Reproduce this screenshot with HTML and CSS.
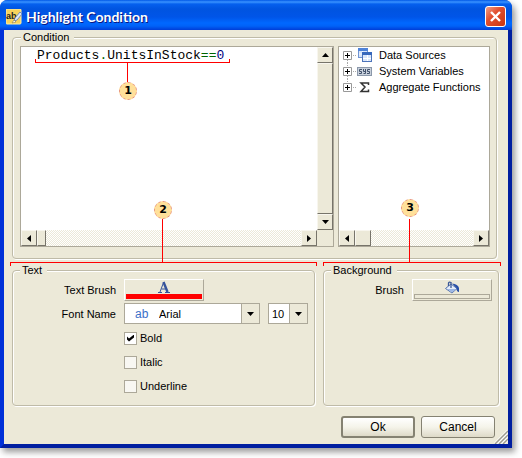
FILE: index.html
```html
<!DOCTYPE html>
<html lang="en">
<head>
  <meta charset="UTF-8" />
  <meta name="viewport" content="width=device-width, initial-scale=1.0" />
  <title>Highlight Condition</title>
  <link rel="stylesheet" href="styles.css">
</head>
<body>
  <div class="window">
    <header class="titlebar">
      <svg class="app-icon" width="16" height="16" viewBox="0 0 16 16">
        <rect x="0" y="0" width="15" height="15" rx="1" fill="#f7d35c" stroke="#fff0a8"/>
        <text x="0" y="10" class="icon-ab">ab</text>
        <path d="M8 12l1-3 5-6 2 2-5 6z" fill="#dfe9f7" stroke="#5c7bb0" stroke-width=".8"/>
        <path d="M6 14l2-3 2 2z" fill="#fff" stroke="#8a7a45" stroke-width=".6"/>
      </svg>
      <h1>Highlight Condition</h1>
      <button class="close" aria-label="Close">
        <svg width="19" height="19" viewBox="0 0 19 19"><path d="M5 5l9 9M14 5l-9 9" stroke="#fff" stroke-width="2.4"/></svg>
      </button>
    </header>

    <form class="client" onsubmit="return false">
      <fieldset class="condition">
        <legend>Condition</legend>
        <div class="editor">
          <div class="code" contenteditable="true" spellcheck="false" role="textbox" aria-label="Condition">Products<b>.</b>UnitsInStock<b>==</b><i>0</i></div>
          <div class="vbar">
            <button class="arrow" aria-label="Up"><svg width="7" height="4"><path d="M0 4L3.500 0L7 4z"/></svg></button>
            <span class="thumb"></span>
            <button class="arrow" aria-label="Down"><svg width="7" height="4"><path d="M0 0h7L3.500 4z"/></svg></button>
          </div>
          <div class="hbar">
            <button class="arrow" aria-label="Left"><svg width="4" height="7"><path d="M4 0v7L0 3.500z"/></svg></button>
            <span class="thumb small"></span>
            <button class="arrow end" aria-label="Right"><svg width="4" height="7"><path d="M0 0v7L4 3.500z"/></svg></button>
          </div>
        </div>
        <div class="tree">
          <ul>
            <li>
              <svg class="plus" width="14" height="16"><path d="M4.500 13v3M10 8.500h4" class="dots"/><path d="M.5 4.500h8v8h-8z" class="box"/><path d="M2 8.500h5M4.500 6v5" class="sign"/></svg>
              <svg width="16" height="16" viewBox="0 0 16 16">
                <rect x="1.500" y="1.500" width="9" height="9" fill="#d6e4fa" stroke="#6f93d2"/><path d="M1 1h10v3H1z" fill="#4f83d8"/><path d="M2 7h8M5.500 4v6" stroke="#f4f8ff"/>
                <rect x="5.500" y="6.500" width="9" height="8" fill="#d9e6fb" stroke="#4d74ba"/><path d="M5 5h10v3H5z" fill="#3768bd"/><path d="M6 11.500h8M10.500 8v6" stroke="#fff"/>
              </svg>
              <span>Data Sources</span>
            </li>
            <li>
              <svg class="plus" width="14" height="16"><path d="M4.500 0v4M4.500 13v3M10 8.500h4" class="dots"/><path d="M.5 4.500h8v8h-8z" class="box"/><path d="M2 8.500h5M4.500 6v5" class="sign"/></svg>
              <svg width="16" height="16" viewBox="0 0 16 16">
                <rect x=".5" y="4.500" width="14" height="8" fill="#c9d1dc" stroke="#8b98aa"/>
                <path d="M5 6.500H2.500v2h2v2H2M6.500 6v2.500h2V6M8.500 8v2.500h-2M13 6.500h-2.500v2h2v2H10" fill="none" stroke="#40506a"/>
              </svg>
              <span>System Variables</span>
            </li>
            <li>
              <svg class="plus" width="14" height="16"><path d="M4.500 0v4M10 8.500h4" class="dots"/><path d="M.5 4.500h8v8h-8z" class="box"/><path d="M2 8.500h5M4.500 6v5" class="sign"/></svg>
              <svg width="16" height="16" viewBox="0 0 16 16"><path d="M11.500 6V4H4L8 8L4 12.500h7.500V10.500" fill="none" stroke="#333" stroke-width="1.500"/></svg>
              <span>Aggregate Functions</span>
            </li>
          </ul>
          <div class="hbar">
            <button class="arrow" aria-label="Left"><svg width="4" height="7"><path d="M4 0v7L0 3.500z"/></svg></button>
            <span class="thumb"></span>
            <button class="arrow end" aria-label="Right"><svg width="4" height="7"><path d="M0 0v7L4 3.500z"/></svg></button>
          </div>
        </div>
      </fieldset>

      <div class="groups">
        <fieldset class="text-group">
          <legend>Text</legend>
          <label for="textBrush">Text Brush</label>
          <button class="brush red" id="textBrush">
            <svg width="12" height="12" viewBox="0 0 12 12"><path d="M0 11.500h4M7 11.500h5M2 11L5.500 1.500M3.500 8h4" stroke="#35539b" fill="none"/><path d="M5.500 1L9.500 11" stroke="#35539b" stroke-width="2.4"/></svg>
            <span></span>
          </button>
          <label for="fontName">Font Name</label>
          <div class="combos">
            <div class="combo font">
              <span class="ab">ab</span>
              <select id="fontName"><option>Arial</option></select>
              <svg width="7" height="4"><path d="M0 0h7L3.500 4z"/></svg>
            </div>
            <div class="combo size">
              <select aria-label="Font size"><option>10</option></select>
              <svg width="7" height="4"><path d="M0 0h7L3.500 4z"/></svg>
            </div>
          </div>
          <div class="checks">
            <label><input type="checkbox" checked>Bold</label>
            <label><input type="checkbox">Italic</label>
            <label><input type="checkbox">Underline</label>
          </div>
        </fieldset>
        <fieldset class="back-group">
          <legend>Background</legend>
          <label for="brush">Brush</label>
          <button class="brush" id="brush">
            <svg width="16" height="13" viewBox="0 0 16 13"><path d="M1.500 7.500L7 3l6 4.500L8 12z" fill="#e6eefa" stroke="#5573ad"/><path d="M3 8l5 3.500 4-3.500z" fill="#9db7e4"/><path d="M8 2.500Q14 3 15 7v4q-2.500 0-2.500-4z" fill="#2850a8"/><path d="M4.500 5V2Q5 .5 7 1.500V7" fill="none" stroke="#3b5998" stroke-width="1.300"/></svg>
            <span></span>
          </button>
        </fieldset>
      </div>

      <footer class="buttons">
        <button class="push default">Ok</button>
        <button class="push">Cancel</button>
      </footer>
    </form>
    <svg class="grip" width="14" height="14"><path d="M1 14L14 1M5 14l9-9M9 14l5-5" stroke="#fff" stroke-width="3"/><path d="M1 14L14 1M5 14l9-9M9 14l5-5" stroke="#9c9a8c" stroke-width="1.500"/></svg>

    <!-- callouts -->
    <div class="mark mark1"><i></i><b>1</b></div>
    <div class="mark mark2"><i></i><b>2</b></div>
    <div class="mark mark3"><i></i><b>3</b></div>
  </div>
</body>
</html>
```
FILE: styles.css
```css
* {
  box-sizing: border-box;
}
body {
  margin: 0;
  padding: 0 10px 10px 0;
  background: #fff;
  font: 11px/16px "Liberation Sans", Arial, sans-serif;
  color: #000;
}
button, select, input {
  font: inherit;
  color: inherit;
  margin: 0;
  padding: 0;
}
svg {
  display: block;
  flex: none;
}
.window {
  position: relative;
  border: 4px solid #0831d9;
  border-color: #0048f0 #001ea0 #001ea0 #0030d8;
  border-top: 0;
  border-radius: 8px 8px 0 0;
  background: #ece9d8;
  box-shadow: 3px 4px 6px rgba(0,0,0,0.4);
}
.titlebar {
  display: flex;
  align-items: center;
  gap: 4px;
  height: 30px;
  margin: 0 -4px;
  padding: 3px 6px 0;
  border-radius: 7px 7px 0 0;
  background: linear-gradient(#0058e6 0, #3a93ff 2px, #0560ee 4px, #0054e0 9px, #0055e8 17px, #0068ff 23px, #0062f8 26px, #003dd7 30px);
}
.titlebar h1 {
  flex: 1;
  margin: 0;
  font: bold 14px/20px Lato, "Open Sans", sans-serif;
  color: #fff;
  text-shadow: 1px 1px #0a1883;
}
.icon-ab {
  font: bold 9px "Liberation Sans", sans-serif;
  fill: #222;
}
.close {
  width: 21px;
  height: 21px;
  border: 1px solid #fff;
  border-radius: 3px;
  background: linear-gradient(135deg, #f0a088, #e25030 40%, #c83510);
}
.client {
  padding: 0 9px 6px 8px;
}
fieldset {
  min-width: 0;
  margin: 0;
  border: 1px solid #bfbba8;
  border-radius: 4px;
  box-shadow: 1px 1px #fff, inset 1px 1px #fff;
}
legend {
  margin-left: 1px;
  padding: 0 5px 0 2px;
  line-height: 14px;
  background: #ece9d8;
}
.condition {
  display: flex;
  gap: 4px;
  margin-right: 2px;
  padding: 2px 6px 11px 7px;
}
.editor, .tree {
  height: 201px;
  border: 1px solid #aca899;
  background: #fff;
}
.editor {
  flex: 1;
  display: grid;
  grid-template: 1fr 16px / 1fr 16px;
  background: #ece9d8;
}
.code {
  padding: 0 16px;
  font: 13px/17px "Liberation Mono", monospace;
  background: #fff;
  outline: none;
}
.code b {
  font-weight: normal;
  color: #006400;
}
.code i {
  font-style: normal;
  color: #000080;
}
.vbar, .hbar {
  display: flex;
  background: repeating-conic-gradient(#fff 0 25%, #ece9d8 0 50%) 0 0 / 2px 2px;
}
.vbar {
  flex-direction: column;
}
.vbar .thumb {
  flex: 1;
}
.arrow, .thumb {
  display: flex;
  align-items: center;
  justify-content: center;
  flex: none;
  width: 16px;
  height: 16px;
  border: 1px solid;
  border-color: #f8f6ee #77746a #77746a #f8f6ee;
  background: #ece9d8;
}
.hbar .small {
  width: 9px;
}
.end {
  margin-left: auto;
}
.tree {
  display: flex;
  flex-direction: column;
  justify-content: space-between;
  width: 152px;
}
.tree ul {
  margin: 0;
  padding: 0 0 0 4px;
  list-style: none;
}
.tree li {
  display: flex;
  white-space: nowrap;
}
.tree li span {
  margin-left: 6px;
}
.dots {
  stroke: #aaa;
  stroke-dasharray: 1 1;
}
.box {
  fill: #fff;
  stroke: #999;
}
.sign {
  stroke: #000;
}
.groups {
  display: grid;
  grid-template-columns: 1fr 176px;
  gap: 8px;
  margin-top: 4px;
}
.groups fieldset {
  display: grid;
  align-content: start;
  align-items: center;
  gap: 2px 8px;
  height: 143px;
  padding: 2px 6px 0;
}
.groups label {
  text-align: right;
}
.groups .text-group {
  grid-template-columns: 97px 1fr;
}
.groups .back-group {
  grid-template-columns: 74px 80px;
}
.brush {
  display: flex;
  flex-direction: column;
  align-items: center;
  justify-content: space-between;
  width: 80px;
  height: 22px;
  padding: 1px 1px 1px;
  border: 1px solid;
  border-color: #fff #aca899 #aca899 #fff;
  background: #ece9d8;
}
.brush span {
  width: 100%;
  height: 5px;
  border: 1px solid #aca899;
}
.red span {
  border-color: #f00;
  background: #f00;
}
.combos {
  display: flex;
  gap: 8px;
}
.combo {
  position: relative;
  display: flex;
  align-items: center;
  height: 21px;
  border: 1px solid #aca899;
  background: linear-gradient(to left, #ece9d8 17px, #aca899 17px, #aca899 18px, #fff 18px);
}
.font {
  width: 136px;
}
.size {
  width: 40px;
}
.combo select {
  flex: 1;
  min-width: 0;
  height: 19px;
  border: 0;
  background: none;
  appearance: none;
}
.combo svg {
  margin-right: 5px;
  pointer-events: none;
}
.size select {
  padding-left: 3px;
}
.ab {
  width: 24px;
  margin-left: 10px;
  font-size: 12px;
  color: #3a6fc8;
}
.checks {
  grid-column: 2;
  display: grid;
  gap: 8px;
  margin-top: 4px;
}
.checks label {
  display: flex;
  align-items: center;
  gap: 3px;
}
.checks input {
  appearance: none;
  display: grid;
  place-items: center;
  width: 13px;
  height: 13px;
  border: 1px solid #aca899;
  background: #f8f7f2;
}
.checks input:checked {
  background: #fff;
}
.checks input:checked::after {
  content: "";
  width: 7px;
  height: 7px;
  background: #000;
  clip-path: polygon(0 2px, 2px 4px, 7px 0, 7px 3px, 2px 7px, 0 5px);
}
.buttons {
  display: flex;
  justify-content: flex-end;
  gap: 6px;
  margin-top: 10px;
  padding-right: 4px;
}
.push {
  width: 74px;
  height: 22px;
  border: 1px solid #858272;
  border-radius: 3px;
  font-size: 12px;
  background: linear-gradient(#fff, #f5f4ea 50%, #dedac8);
}
.default {
  border-width: 2px;
}
.grip {
  position: absolute;
  right: 0;
  bottom: 0;
}
.mark {
  position: absolute;
  border: 1px solid #f00;
  pointer-events: none;
}
.mark i {
  position: absolute;
  width: 1px;
  background: #f00;
}
.mark b {
  position: absolute;
  width: 18px;
  height: 18px;
  border: 1px dashed #e8927c;
  border-radius: 50%;
  background: #ffe09a;
  font: bold 11px/16px "DejaVu Sans", sans-serif;
  text-align: center;
}
.mark1 {
  left: 31px;
  top: 59px;
  width: 195px;
  height: 4px;
  border-top: 0;
}
.mark1 i {
  left: 91px;
  top: 4px;
  height: 20px;
}
.mark1 b {
  left: 83px;
  top: 23px;
}
.mark2, .mark3 {
  top: 262px;
  height: 4px;
  border-bottom: 0;
}
.mark2 {
  left: 6px;
  right: 191px;
}
.mark3 {
  right: 7px;
  width: 178px;
}
.mark2 i, .mark3 i {
  bottom: 3px;
  height: 44px;
}
.mark2 i {
  left: 151px;
}
.mark2 b {
  left: 143px;
  top: -62px;
}
.mark3 i {
  left: 85px;
}
.mark3 b {
  left: 77px;
  top: -64px;
}
```
